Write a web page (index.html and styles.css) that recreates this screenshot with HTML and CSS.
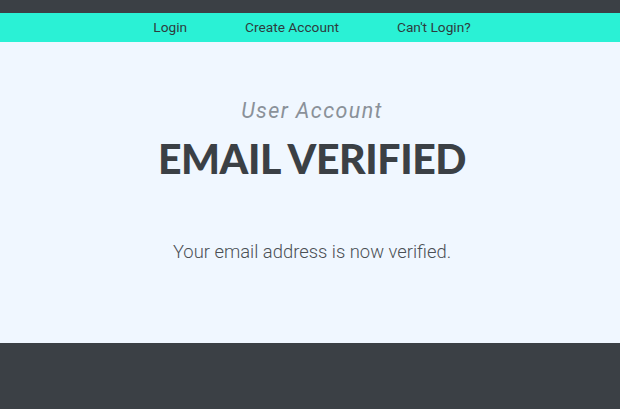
FILE: index.html
```html
<!DOCTYPE html>
<html>
<head>
<meta charset="utf-8">
<link rel="stylesheet" href="styles.css">
</head>
<body>
<div class="topbar"></div>
<nav class="nav">
  <a href="#">Login</a>
  <a href="#">Create Account</a>
  <a href="#">Can't Login?</a>
</nav>
<main class="content">
  <p class="eyebrow">User Account</p>
  <h1 class="title">EMAIL VERIFIED</h1>
  <p class="message">Your email address is now verified.</p>
</main>
<footer class="footer"></footer>
</body>
</html>
```
FILE: styles.css
```css
html, body { margin: 0; padding: 0; }
body {
  background: #3b4045;
  font-family: Roboto, "Liberation Sans", sans-serif;
  min-height: 409px;
}
.topbar { height: 13px; background: #3b4045; }
.nav {
  height: 29px;
  background: #2af1d5;
  display: flex;
  justify-content: center;
  align-items: center;
  gap: 58px;
  padding-left: 4px;
  padding-bottom: 1px;
  box-sizing: border-box;
}
.nav a {
  color: #2f3b3d;
  text-decoration: none;
  font-size: 13.7px;
}
.content {
  background: #f0f7ff;
  height: 301px;
  box-sizing: border-box;
  padding-top: 57px;
  padding-left: 4px;
  text-align: center;
}
.eyebrow {
  margin: 0;
  font-style: italic;
  font-weight: 400;
  font-size: 21.5px;
  letter-spacing: 1.4px;
  color: #8a9199;
  line-height: 24px;
}
.title {
  margin: 14px 0 0;
  font-family: Lato, sans-serif;
  font-weight: 900;
  font-size: 41px;
  line-height: 44px;
  color: #3b4045;
  letter-spacing: -0.4px;
}
.message {
  margin: 60px 0 0;
  font-weight: 300;
  font-size: 18.4px;
  color: #4b5055;
}
.footer { height: 66px; background: #3b4045; }
```
